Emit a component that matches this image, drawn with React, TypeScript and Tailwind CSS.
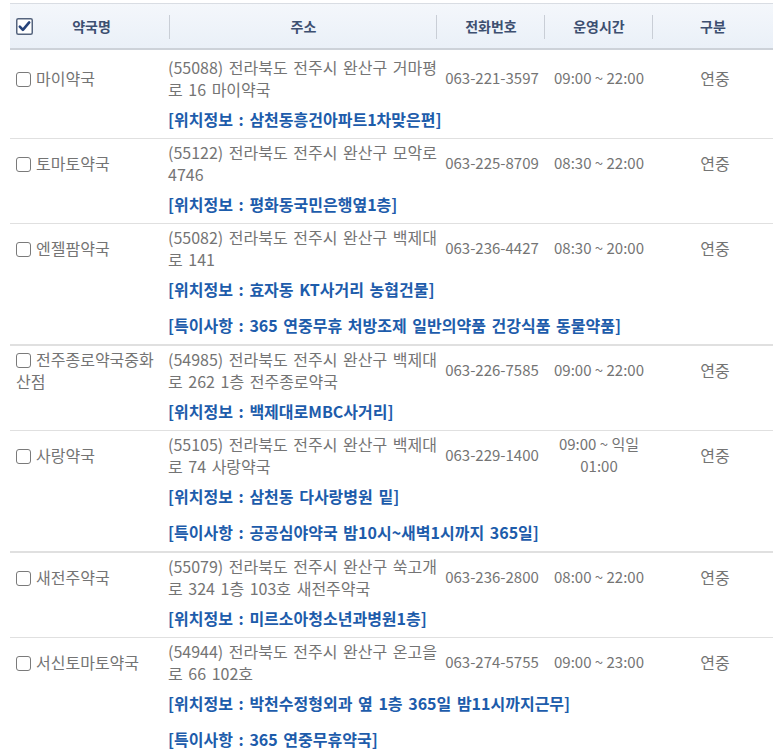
import React from "react";

type Row = {
  name: string;
  addr: string[];
  phone: string;
  hours: string[];
  kind: string;
  notes: string[];
};

const rows: Row[] = [
  {
    name: "마이약국",
    addr: ["(55088) 전라북도 전주시 완산구 거마평", "로 16 마이약국"],
    phone: "063-221-3597",
    hours: ["09:00 ~ 22:00"],
    kind: "연중",
    notes: ["[위치정보 : 삼천동흥건아파트1차맞은편]"],
  },
  {
    name: "토마토약국",
    addr: ["(55122) 전라북도 전주시 완산구 모악로", "4746"],
    phone: "063-225-8709",
    hours: ["08:30 ~ 22:00"],
    kind: "연중",
    notes: ["[위치정보 : 평화동국민은행옆1층]"],
  },
  {
    name: "엔젤팜약국",
    addr: ["(55082) 전라북도 전주시 완산구 백제대", "로 141"],
    phone: "063-236-4427",
    hours: ["08:30 ~ 20:00"],
    kind: "연중",
    notes: [
      "[위치정보 : 효자동 KT사거리 농협건물]",
      "[특이사항 : 365 연중무휴 처방조제 일반의약품 건강식품 동물약품]",
    ],
  },
  {
    name: "전주종로약국중화산점",
    addr: ["(54985) 전라북도 전주시 완산구 백제대", "로 262 1층 전주종로약국"],
    phone: "063-226-7585",
    hours: ["09:00 ~ 22:00"],
    kind: "연중",
    notes: ["[위치정보 : 백제대로MBC사거리]"],
  },
  {
    name: "사랑약국",
    addr: ["(55105) 전라북도 전주시 완산구 백제대", "로 74 사랑약국"],
    phone: "063-229-1400",
    hours: ["09:00 ~ 익일", "01:00"],
    kind: "연중",
    notes: [
      "[위치정보 : 삼천동 다사랑병원 밑]",
      "[특이사항 : 공공심야약국 밤10시~새벽1시까지 365일]",
    ],
  },
  {
    name: "새전주약국",
    addr: ["(55079) 전라북도 전주시 완산구 쑥고개", "로 324 1층 103호 새전주약국"],
    phone: "063-236-2800",
    hours: ["08:00 ~ 22:00"],
    kind: "연중",
    notes: ["[위치정보 : 미르소아청소년과병원1층]"],
  },
  {
    name: "서신토마토약국",
    addr: ["(54944) 전라북도 전주시 완산구 온고을", "로 66 102호"],
    phone: "063-274-5755",
    hours: ["09:00 ~ 23:00"],
    kind: "연중",
    notes: [
      "[위치정보 : 박천수정형외과 옆 1층 365일 밤11시까지근무]",
      "[특이사항 : 365 연중무휴약국]",
    ],
  },
];

const font = { fontFamily: '"Noto Sans CJK KR", "Noto Sans", sans-serif' };

function Box() {
  return (
    <span className="inline-block w-[15px] h-[15px] border-[1.5px] border-[#7a7a7a] rounded-[3px] bg-white align-[-2px] mr-[5px]" />
  );
}

function CheckedBox() {
  return (
    <svg width="17" height="17" viewBox="0 0 17 17" className="block">
      <rect x="0.75" y="0.75" width="15.5" height="15.5" rx="1.5" fill="#fff" stroke="#55647e" strokeWidth="1.5" />
      <path d="M3.8 8.6 L6.9 11.8 L13.2 4.4" fill="none" stroke="#26437a" strokeWidth="2.6" strokeLinecap="round" strokeLinejoin="round" />
    </svg>
  );
}

function Sep() {
  return <span className="absolute right-0 top-[11px] h-[24px] w-px bg-[#c9ced6]" />;
}

export default function App() {
  return (
    <div className="w-[776px] h-[755px] bg-white overflow-hidden" style={font}>
      <div className="ml-[10px] mr-[3px] pt-[3px]">
        {/* header */}
        <div className="grid grid-cols-[160px_267px_108px_108px_1fr] h-[47px] border-t border-[#d9dde3] border-b-2 border-b-[#cdd2d9] bg-gradient-to-b from-[#f4f7fb] to-[#eaf0f8] text-[14px] font-bold text-[#3d4f70]">
          <div className="relative flex items-center pl-[6px]">
            <CheckedBox />
            <span className="flex-1 text-center pr-[20px]">약국명</span>
            <Sep />
          </div>
          <div className="relative flex items-center justify-center">
            주소
            <Sep />
          </div>
          <div className="relative flex items-center justify-center">
            전화번호
            <Sep />
          </div>
          <div className="relative flex items-center justify-center">
            운영시간
            <Sep />
          </div>
          <div className="flex items-center justify-center">구분</div>
        </div>
        {/* rows */}
        {rows.map((r, i) => (
          <div
            key={i}
            className={`grid grid-cols-[158px_269px_108px_108px_1fr] text-[16px] leading-[22px] text-[#747474] ${
              r.notes.length > 1 ? "border-b-2" : "border-b"
            } border-[#e0e0e0] ${i === 0 ? "pt-[6px]" : "pt-[2px]"}`}
          >
            <div className="self-center pl-[6px] pr-[4px]">
              <Box />
              {r.name}
            </div>
            <div className="whitespace-nowrap [word-spacing:2px]">
              {r.addr.map((a, j) => (
                <div key={j}>{a}</div>
              ))}
            </div>
            <div className="self-center text-center whitespace-nowrap text-[15px] pl-[2px]">{r.phone}</div>
            <div className="self-center text-center whitespace-nowrap text-[15px]">
              {r.hours.map((h, j) => (
                <div key={j}>{h}</div>
              ))}
            </div>
            <div className="self-center text-center pl-[4px]">{r.kind}</div>
            <div className="col-start-2 col-span-4 pt-[8px] pb-[8px] flex flex-col gap-[14px] font-bold text-[#1d5cab] whitespace-nowrap [word-spacing:2px]">
              {r.notes.map((n, j) => (
                <div key={j}>{n}</div>
              ))}
            </div>
          </div>
        ))}
      </div>
    </div>
  );
}
